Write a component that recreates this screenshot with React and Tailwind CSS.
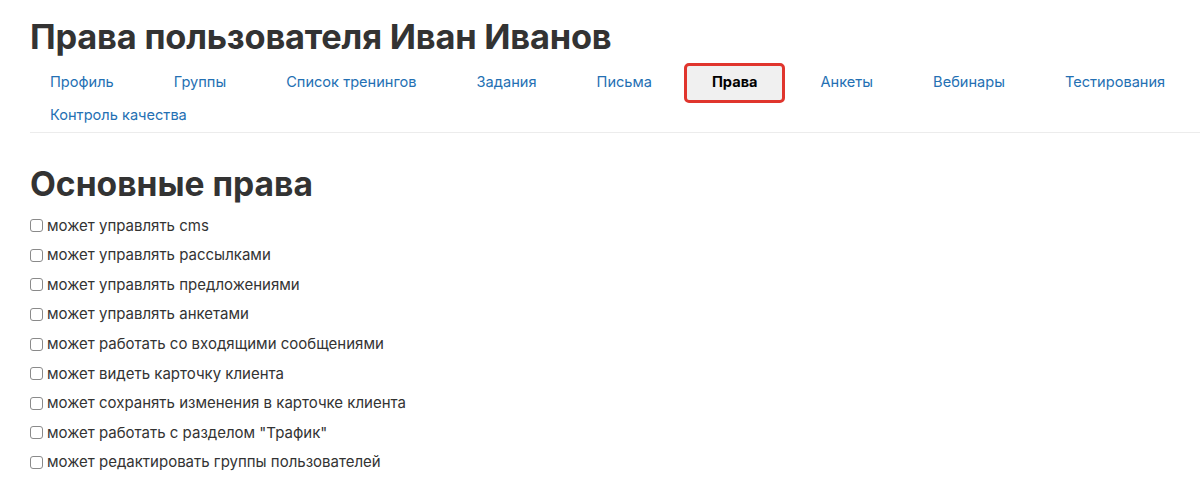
const tabs = [
  'Профиль',
  'Группы',
  'Список тренингов',
  'Задания',
  'Письма',
  'Права',
  'Анкеты',
  'Вебинары',
  'Тестирования',
  'Контроль качества',
];

const rights = [
  'может управлять cms',
  'может управлять рассылками',
  'может управлять предложениями',
  'может управлять анкетами',
  'может работать со входящими сообщениями',
  'может видеть карточку клиента',
  'может сохранять изменения в карточке клиента',
  'может работать с разделом "Трафик"',
  'может редактировать группы пользователей',
];

export default function App() {
  return (
    <div className="min-h-[481px] bg-white pl-[30px] pt-[13px] text-[#333] font-['Inter','Liberation_Sans',sans-serif]">
      <h1 className="text-[34.4px] leading-[48px] font-bold tracking-[-0.2px]">
        Права пользователя Иван Иванов
      </h1>

      <ul className="flex flex-wrap gap-x-5 border-b border-[#ececec] pt-[5px]">
        {tabs.map((t) =>
          t === 'Права' ? (
            <li key={t} className="-ml-2 -mr-1 flex h-[33px] items-center">
              <span className="flex h-[40px] items-center rounded-[5px] border-[3px] border-[#e0352d] bg-[#f0f0f0] pl-[25px] pr-[24px] text-[14.6px] font-bold text-black">
                {t}
              </span>
            </li>
          ) : (
            <li key={t} className="flex h-[33px] items-center px-5">
              <a className="text-[14.6px] text-[#2470b3]">{t}</a>
            </li>
          )
        )}
      </ul>

      <h2 className="mt-[29px] text-[33.6px] leading-[44px] font-bold">Основные права</h2>

      <div className="mt-[5px] flex flex-col">
        {rights.map((r) => (
          <label key={r} className="flex h-[29.6px] items-center text-[15px]">
            <span className="mr-[4px] h-[13px] w-[13px] rounded-[3px] border border-[#8a8a8a] bg-white" />
            {r}
          </label>
        ))}
      </div>
    </div>
  );
}
